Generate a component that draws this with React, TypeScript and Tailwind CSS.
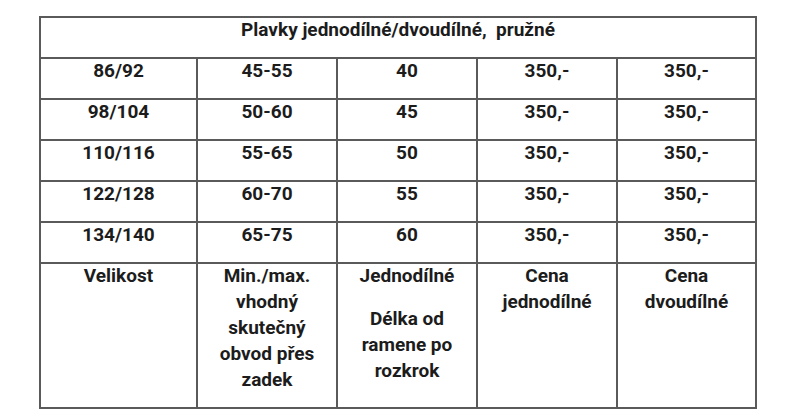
import React from 'react';

const rows = [
  ['86/92', '45-55', '40', '350,-', '350,-'],
  ['98/104', '50-60', '45', '350,-', '350,-'],
  ['110/116', '55-65', '50', '350,-', '350,-'],
  ['122/128', '60-70', '55', '350,-', '350,-'],
  ['134/140', '65-75', '60', '350,-', '350,-'],
];

const cell = 'border-2 border-[#5a5a5a] align-top text-center p-0';

export default function App() {
  return (
    <div className="w-[804px] h-[418px] bg-white pt-[16px] pl-[39px] text-[#1c1c1c] font-['Roboto',sans-serif] font-bold text-[19px] leading-[26px]">
      <table className="border-collapse table-fixed w-[716px]">
        <colgroup>
          <col className="w-[157px]" />
          <col className="w-[140px]" />
          <col className="w-[140px]" />
          <col className="w-[140px]" />
          <col className="w-[139px]" />
        </colgroup>
        <tbody>
          <tr className="h-[41px]">
            <td colSpan={5} className={cell}>
              <div className="-mt-[1.5px]">Plavky jednodílné/dvoudílné,&nbsp; pružné</div>
            </td>
          </tr>
          {rows.map((r) => (
            <tr key={r[0]} className="h-[41px]">
              {r.map((v, i) => (
                <td key={i} className={cell}>
                  <div className="-mt-[1.5px]">{v}</div>
                </td>
              ))}
            </tr>
          ))}
          <tr className="h-[145px]">
            <td className={cell}>
              <div className="-mt-[1.5px]">Velikost</div>
            </td>
            <td className={cell}>
              <div className="-mt-[1.5px] px-3">Min./max. vhodný skutečný obvod přes zadek</div>
            </td>
            <td className={cell}>
              <div className="-mt-[1.5px]">Jednodílné</div>
              <div className="mt-[17px] px-4">Délka od ramene po rozkrok</div>
            </td>
            <td className={cell}>
              <div className="-mt-[1.5px] px-3">Cena jednodílné</div>
            </td>
            <td className={cell}>
              <div className="-mt-[1.5px] px-3">Cena dvoudílné</div>
            </td>
          </tr>
        </tbody>
      </table>
    </div>
  );
}
